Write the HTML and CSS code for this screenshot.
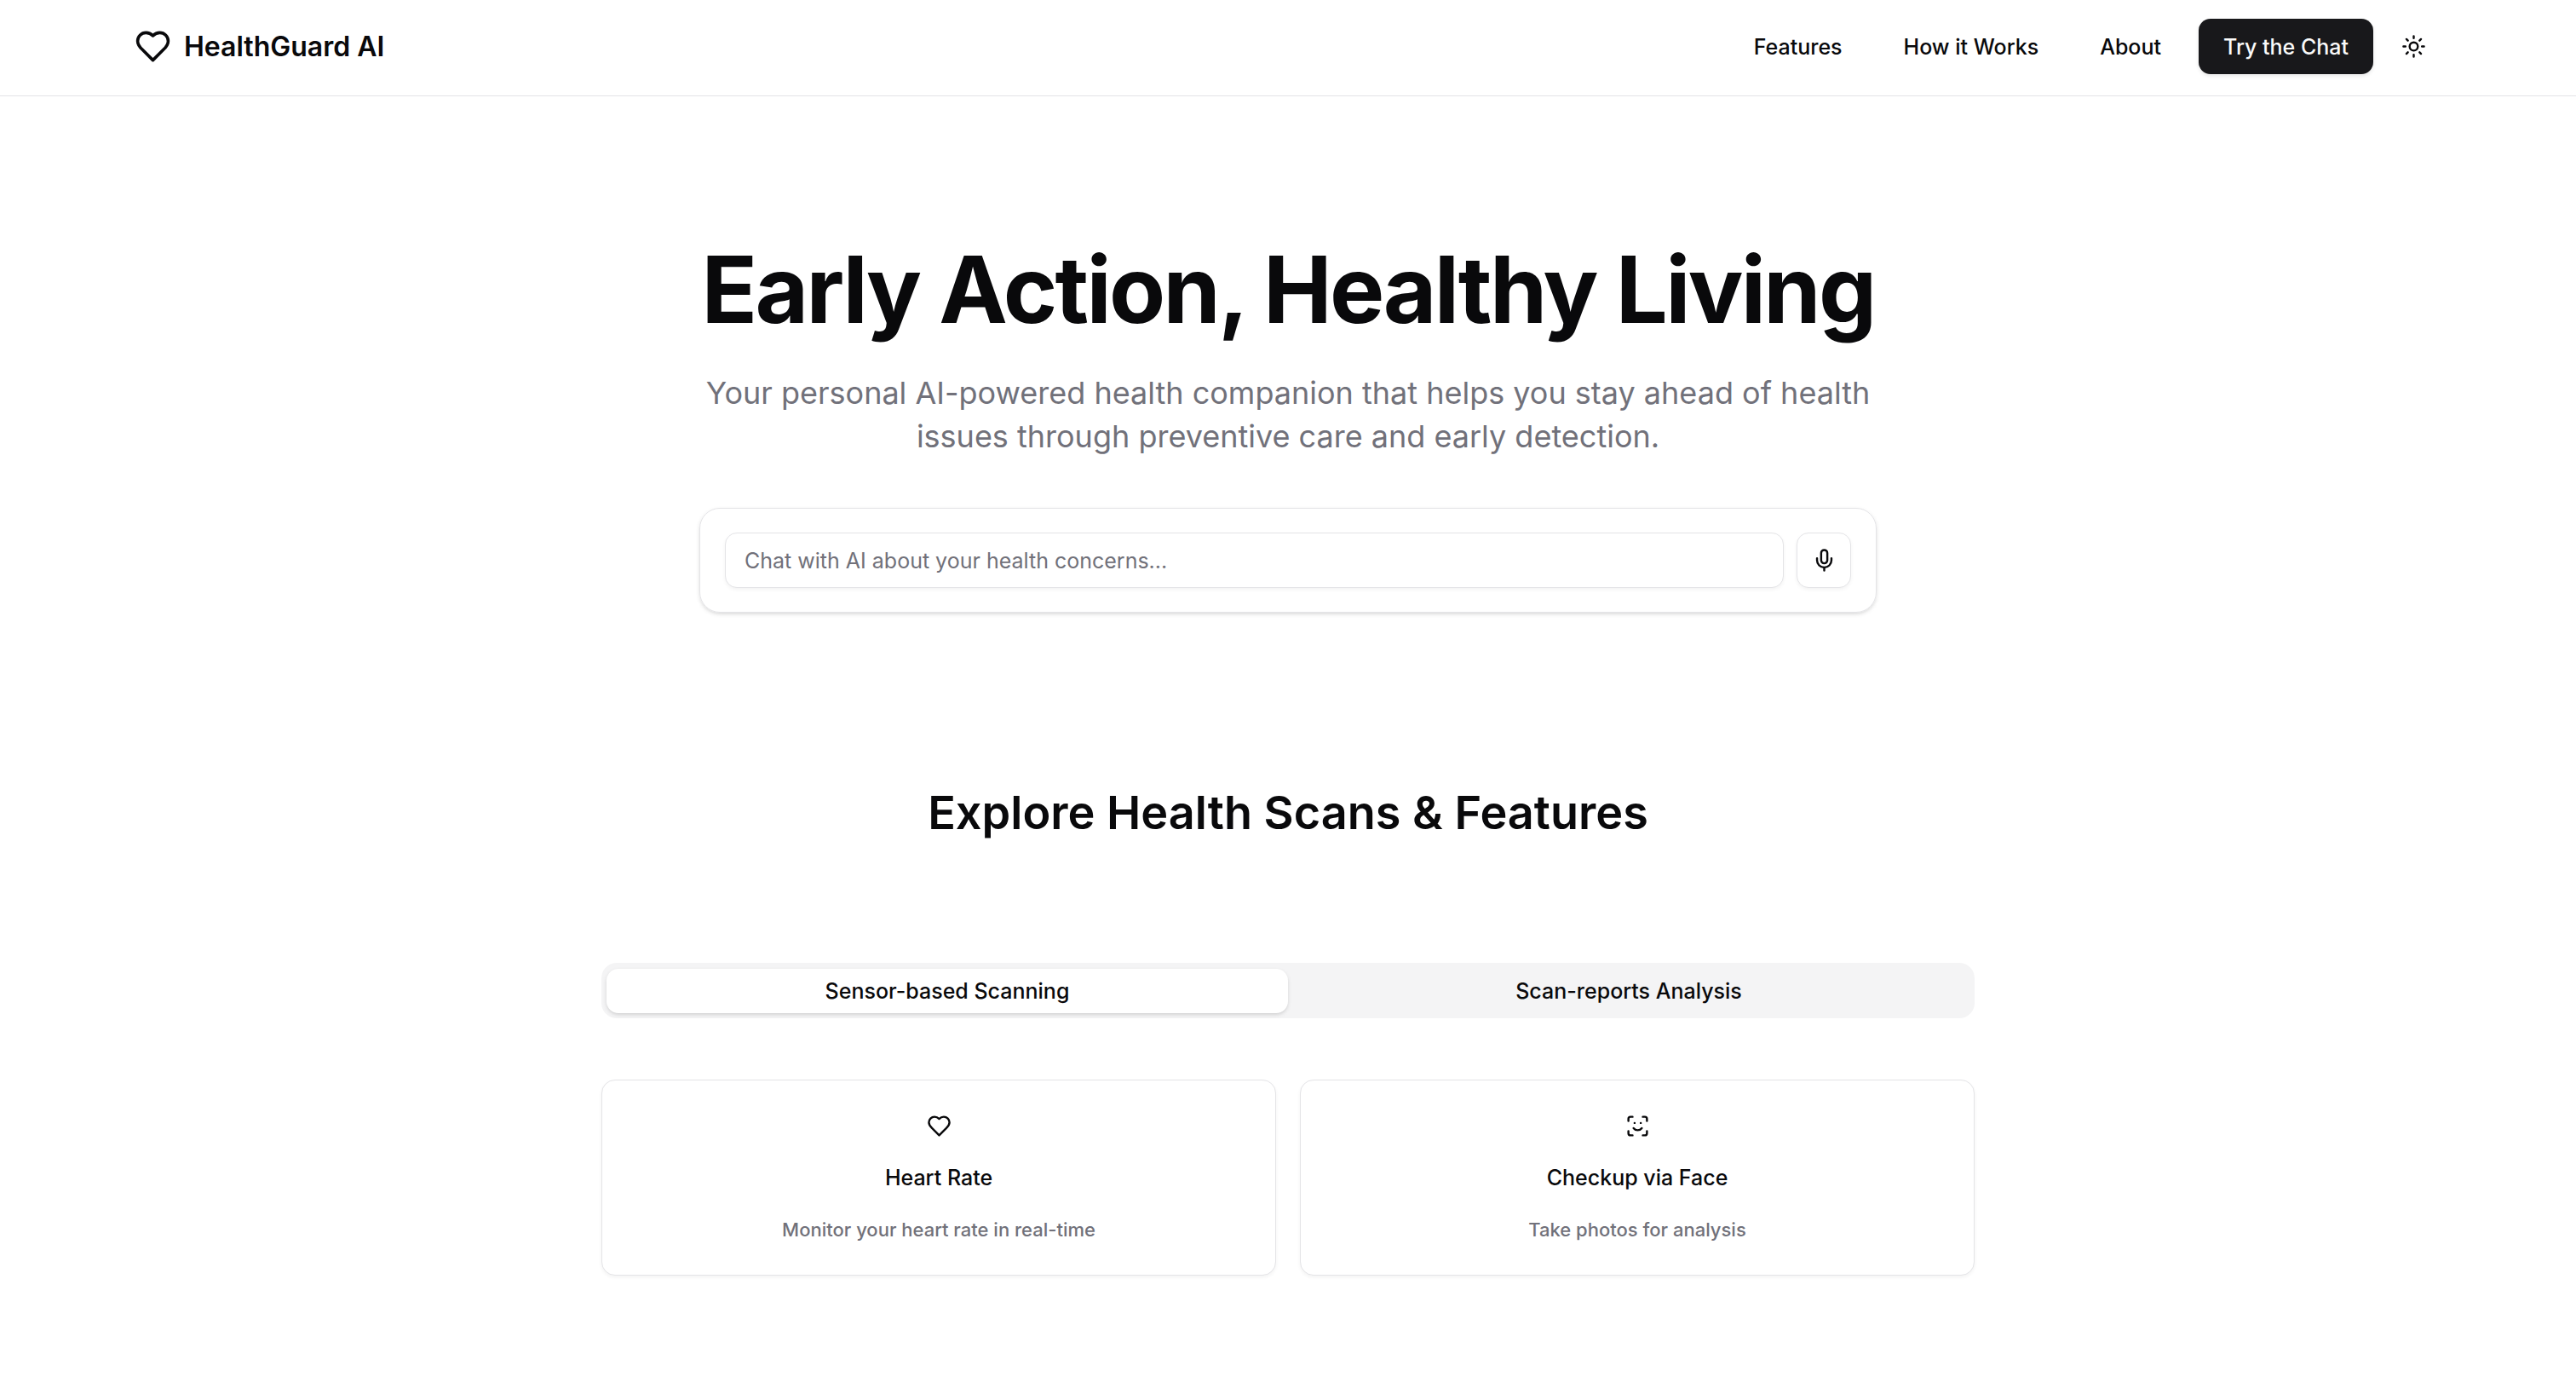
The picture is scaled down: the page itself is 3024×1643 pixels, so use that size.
FILE: index.html
```html
<!DOCTYPE html>
<html lang="en">
<head>
<meta charset="utf-8">
<title>HealthGuard AI</title>
<link rel="stylesheet" href="styles.css">
</head>
<body>
<header class="site-header">
  <div class="header-inner">
    <a class="brand" href="#">
      <svg class="icon icon-brand" viewBox="0 0 24 24"><path d="M19 14c1.49-1.46 3-3.21 3-5.5A5.5 5.5 0 0 0 16.5 3c-1.76 0-3 .5-4.5 2-1.5-1.5-2.74-2-4.5-2A5.5 5.5 0 0 0 2 8.5c0 2.3 1.5 4.05 3 5.5l7 7Z"/></svg>
      <span>HealthGuard AI</span>
    </a>
    <nav class="nav">
      <a class="nav-link" href="#features">Features</a>
      <a class="nav-link" href="#how">How it Works</a>
      <a class="nav-link" href="#about">About</a>
      <button class="chat-button" type="button">Try the Chat</button>
      <button class="theme-button" type="button" aria-label="Toggle theme">
        <svg class="icon" viewBox="0 0 24 24"><circle cx="12" cy="12" r="4"/><path d="M12 2v2M12 20v2M4.93 4.93l1.41 1.41M17.66 17.66l1.41 1.41M2 12h2M20 12h2M6.34 17.66l-1.41 1.41M19.07 4.93l-1.41 1.41"/></svg>
      </button>
    </nav>
  </div>
</header>
<main>
  <section class="hero">
    <h1 class="hero-title">Early Action, Healthy Living</h1>
    <p class="hero-text">Your personal AI-powered health companion that helps you stay ahead of health issues through preventive care and early detection.</p>
    <form class="chat-card">
      <input class="chat-input" type="text" aria-label="Chat message" placeholder="Chat with AI about your health concerns...">
      <button class="mic-button" type="button" aria-label="Voice input">
        <svg class="icon" viewBox="0 0 24 24"><path d="M12 2a3 3 0 0 0-3 3v7a3 3 0 0 0 6 0V5a3 3 0 0 0-3-3Z"/><path d="M19 10v2a7 7 0 0 1-14 0v-2M12 19v3"/></svg>
      </button>
    </form>
  </section>
  <section class="explore" id="features">
    <h2 class="explore-title">Explore Health Scans &amp; Features</h2>
    <div class="tabs" role="tablist">
      <button class="tab tab-active" type="button" role="tab" aria-selected="true">Sensor-based Scanning</button>
      <button class="tab" type="button" role="tab" aria-selected="false">Scan-reports Analysis</button>
    </div>
    <div class="cards">
      <button class="card" type="button">
        <svg class="icon" viewBox="0 0 24 24"><path d="M19 14c1.49-1.46 3-3.21 3-5.5A5.5 5.5 0 0 0 16.5 3c-1.76 0-3 .5-4.5 2-1.5-1.5-2.74-2-4.5-2A5.5 5.5 0 0 0 2 8.5c0 2.3 1.5 4.05 3 5.5l7 7Z"/></svg>
        <span class="card-title">Heart Rate</span>
        <span class="card-text">Monitor your heart rate in real-time</span>
      </button>
      <button class="card" type="button">
        <svg class="icon" viewBox="0 0 24 24"><path d="M3 7V5a2 2 0 0 1 2-2h2M17 3h2a2 2 0 0 1 2 2v2M21 17v2a2 2 0 0 1-2 2h-2M7 21H5a2 2 0 0 1-2-2v-2M8 14s1.500 2 4 2 4-2 4-2M9 9h.01M15 9h.01"/></svg>
        <span class="card-title">Checkup via Face</span>
        <span class="card-text">Take photos for analysis</span>
      </button>
    </div>
  </section>
</main>
</body>
</html>
```
FILE: styles.css
```css
*, *::before, *::after { box-sizing: border-box; }
body {
  margin: 0;
  background: #fff;
  color: #09090b;
  font-family: Inter, "Liberation Sans", sans-serif;
}
button, input { font: inherit; color: inherit; }
button { cursor: pointer; }
.icon {
  display: block;
  flex: none;
  width: 29px;
  height: 29px;
  fill: none;
  stroke: currentColor;
  stroke-width: 2;
  stroke-linecap: round;
  stroke-linejoin: round;
}
.site-header { border-bottom: 1px solid #e4e4e7; }
.header-inner {
  display: flex;
  align-items: center;
  justify-content: space-between;
  max-width: 2800px;
  margin: 0 auto;
  padding: 22px 46px 25px;
}
.brand {
  display: flex;
  align-items: center;
  gap: 15px;
  color: inherit;
  font-size: 32px;
  font-weight: 600;
  line-height: 36px;
  text-decoration: none;
}
.icon-brand { width: 43px; height: 43px; }
.nav { display: flex; align-items: center; }
.nav-link {
  padding: 0 36px;
  color: inherit;
  font-size: 25px;
  font-weight: 500;
  line-height: 36px;
  text-decoration: none;
}
.chat-button {
  height: 65px;
  margin: 0 15px 0 8px;
  padding: 0 29px;
  border: 0;
  border-radius: 14px;
  background: #18181b;
  box-shadow: 0 2px 4px rgb(0 0 0 / 10%);
  color: #fafafa;
  font-size: 25px;
  font-weight: 500;
}
.theme-button {
  display: grid;
  place-items: center;
  width: 65px;
  height: 65px;
  padding: 0;
  border: 0;
  background: none;
}
.hero {
  max-width: 1382px;
  margin: 0 auto;
  padding: 173px 0 203px;
  text-align: center;
}
.hero-title {
  margin: 0;
  font-size: 108px;
  font-weight: 700;
  line-height: 108px;
  letter-spacing: -0.025em;
}
.hero-text {
  margin: 42px 0 58px;
  color: #71717a;
  font-size: 36px;
  line-height: 51px;
}
.chat-card {
  display: flex;
  gap: 15px;
  padding: 28px 29px;
  border: 1px solid #e4e4e7;
  border-radius: 24px;
  box-shadow: 0 2px 5px rgb(0 0 0 / 10%), 0 2px 4px -2px rgb(0 0 0 / 10%);
}
.chat-input {
  flex: 1;
  min-width: 0;
  height: 65px;
  padding: 0 22px;
  border: 1px solid #e4e4e7;
  border-radius: 14px;
  box-shadow: 0 2px 4px rgb(0 0 0 / 5%);
  font-size: 25px;
}
.chat-input::placeholder { color: #71717a; }
.mic-button {
  display: grid;
  place-items: center;
  width: 64px;
  height: 65px;
  padding: 0;
  border: 1px solid #e4e4e7;
  border-radius: 14px;
  background: #fff;
  box-shadow: 0 2px 4px rgb(0 0 0 / 5%);
}
.explore { max-width: 1612px; margin: 0 auto; padding-bottom: 96px; }
.explore-title {
  margin: 0 0 144px;
  font-size: 54px;
  font-weight: 600;
  line-height: 64px;
  text-align: center;
}
.tabs {
  display: grid;
  grid-template-columns: 1fr 1fr;
  padding: 7px 6px 6px;
  border-radius: 18px;
  background: #f4f4f5;
}
.tab {
  height: 52px;
  border: 0;
  border-radius: 14px;
  background: none;
  font-size: 25px;
  font-weight: 500;
}
.tab-active {
  background: #fff;
  box-shadow: 0 2px 5px rgb(0 0 0 / 10%), 0 2px 4px -2px rgb(0 0 0 / 10%);
}
.cards {
  display: grid;
  grid-template-columns: 1fr 1fr;
  gap: 28px;
  margin-top: 72px;
}
.card {
  display: flex;
  flex-direction: column;
  align-items: center;
  padding: 39px 28px;
  border: 1px solid #e4e4e7;
  border-radius: 16px;
  background: #fff;
  box-shadow: 0 2px 4px rgb(0 0 0 / 5%);
  font-weight: 500;
}
.card-title { margin-top: 28px; font-size: 25px; line-height: 36px; }
.card-text { margin-top: 29px; color: #71717a; font-size: 22px; line-height: 28px; }
```
